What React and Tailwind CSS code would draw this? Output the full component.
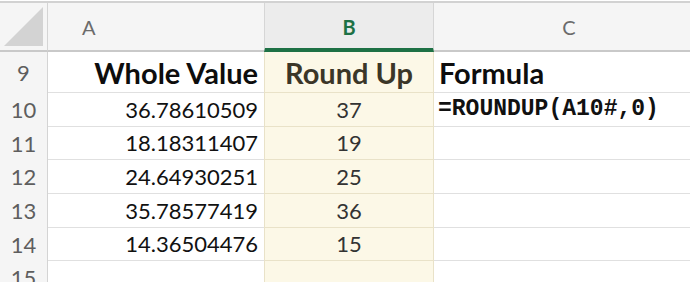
import React from "react";

const rows = [
  { n: 10, a: "36.78610509", b: "37", c: "=ROUNDUP(A10#,0)", h: "h-[34px]" },
  { n: 11, a: "18.18311407", b: "19", c: "", h: "h-[33px]" },
  { n: 12, a: "24.64930251", b: "25", c: "", h: "h-[34px]" },
  { n: 13, a: "35.78577419", b: "36", c: "", h: "h-[34px]" },
  { n: 14, a: "14.36504476", b: "15", c: "", h: "h-[33px]" },
];

const sans = { fontFamily: "Lato, 'Open Sans', sans-serif" };

function RowHead({ children }) {
  return (
    <div className="flex items-center justify-center bg-[#f5f5f5] border-r border-[#d4d4d4] text-[22px] leading-none text-[#5e5e5e]">
      {children}
    </div>
  );
}

export default function App() {
  return (
    <div className="w-[690px] h-[282px] overflow-hidden bg-white pt-px" style={sans}>
      {/* column headers */}
      <div className="grid grid-cols-[48px_216px_170px_1fr] h-[51px] border-t-2 border-[#d2d2d2]">
        <div className="bg-[#f5f5f5] border-r border-[#d4d4d4] border-b-2 border-b-[#c9c9c9] flex items-end pl-[4px] pb-[3px]">
          <svg width="40" height="40" viewBox="0 0 40 40">
            <polygon points="0,39 39,0 39,39" fill="#d3d3d3" />
          </svg>
        </div>
        <div className="bg-[#f5f5f5] border-b-2 border-[#c9c9c9] flex items-center pl-[34px] text-[20px] text-[#6b6b6b] leading-none">
          A
        </div>
        <div className="bg-[#ececec] border-x border-[#d6d6d6] border-b-4 border-b-[#1e7145] flex items-center justify-center pt-[2px] text-[20px] font-bold text-[#1e7145] leading-none">
          B
        </div>
        <div className="bg-[#f5f5f5] border-b-2 border-[#c9c9c9] flex items-center justify-center pl-[14px] text-[20px] text-[#6b6b6b] leading-none">
          C
        </div>
      </div>

      {/* header row 9 */}
      <div className="grid grid-cols-[48px_216px_170px_1fr] h-[41px]">
        <RowHead>9</RowHead>
        <div className="flex items-center justify-end pr-[6px] border-b border-[#e0e0e0] text-[29px] font-bold leading-none text-[#0d0d0d]">
          Whole Value
        </div>
        <div className="flex items-center justify-center bg-[#fcf8e7] border-x border-b border-[#e9e2c8] text-[29px] font-bold leading-none text-[#3b3628]">
          Round Up
        </div>
        <div className="flex items-center pl-[5px] border-b border-[#e0e0e0] text-[29px] font-bold leading-none text-[#0d0d0d]">
          Formula
        </div>
      </div>

      {/* data rows */}
      {rows.map((r) => (
        <div key={r.n} className={`grid grid-cols-[48px_216px_170px_1fr] ${r.h}`}>
          <RowHead>{r.n}</RowHead>
          <div className="flex items-center justify-end pr-[6px] border-b border-[#e0e0e0] text-[22px] leading-none text-[#111111]">
            {r.a}
          </div>
          <div className="flex items-center justify-center bg-[#fcf8e7] border-x border-b border-[#e9e2c8] text-[22px] leading-none text-[#333333]">
            {r.b}
          </div>
          <div
            className="flex items-center pl-[4px] border-b border-[#e0e0e0] text-[23px] font-bold leading-none text-[#111111]"
            style={{ fontFamily: "'Liberation Mono', 'Courier New', monospace" }}
          >
            {r.c}
          </div>
        </div>
      ))}

      {/* row 15 */}
      <div className="grid grid-cols-[48px_216px_170px_1fr] h-[40px]">
        <div className="flex items-start justify-center pt-[6px] bg-[#f5f5f5] border-r border-[#d4d4d4] text-[22px] leading-none text-[#5e5e5e]">
          15
        </div>
        <div />
        <div className="bg-[#fcf8e7] border-x border-[#e9e2c8]" />
        <div />
      </div>
    </div>
  );
}
